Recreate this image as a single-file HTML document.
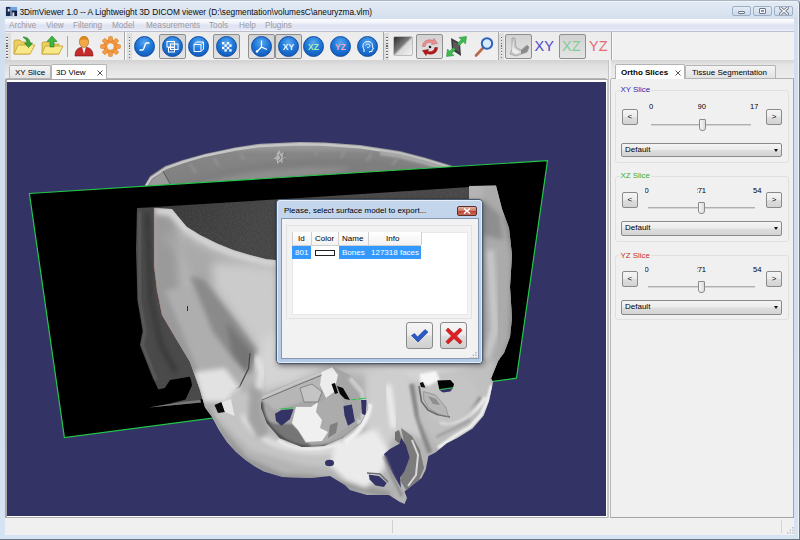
<!DOCTYPE html>
<html>
<head>
<meta charset="utf-8">
<title>3DimViewer</title>
<style>
html,body{margin:0;padding:0;}
body{width:800px;height:540px;overflow:hidden;position:relative;background:#cfdcec;font-family:"Liberation Sans",sans-serif;font-size:8px;color:#000;}
.abs,.abs-c>*{position:absolute;}
div,span{box-sizing:border-box;}
#frame{left:0;top:0;width:800px;height:540px;background:linear-gradient(#e4ebf5 0px,#d3dfee 18px,#d0deee 300px,#d6e3f2 540px);border:1px solid #6a7480;border-left:none;border-top-color:#aab6c4;border-radius:0 4px 0 0;box-shadow:inset -1px 0 0 #eef3fa,inset 0 1px 0 #eef3fa;}
#title{left:19.5px;top:6.5px;font-size:8.3px;white-space:nowrap;color:#0a0a0a;}
.wb{top:6px;height:10px;width:19px;border:1px solid #9fb0c6;border-radius:2px;background:linear-gradient(#e3ebf5,#cbd9ea);}
#menubar{left:5px;top:19px;width:789px;height:13px;background:linear-gradient(#fdfdff 0,#f0f2fa 4px,#dfe3f2 6px,#e2e6f4 10px,#f2f3f9 12px);border-bottom:1px solid #b9bfce;}
#menubar span{position:absolute;top:1.5px;font-size:8.2px;color:#9a9aa2;white-space:nowrap;}
#toolbar{left:4.5px;top:32px;width:789.5px;height:28px;background:linear-gradient(#ececec,#f0f0f0);}
#client{left:5px;top:61px;width:789px;height:474px;background:#f0f0f0;}
.grip{width:6.3px;top:1px;height:26.5px;background:#dedede;}
.grip:after{content:"";position:absolute;left:1.9px;top:3.6px;width:1.5px;height:21px;background:repeating-linear-gradient(#6a6a6a 0,#6a6a6a 1.2px,#f8f8f8 1.2px,#f8f8f8 1.9px,transparent 1.9px,transparent 2.8px);}
.tsep{width:1px;top:0;height:28px;background:#a8a8a8;border-right:1px solid #fafafa;box-sizing:content-box;}
.chk{top:2px;height:25px;border:1px solid #8f8f8f;border-radius:2px;background:linear-gradient(#d2d2d2,#e4e4e4);}
.ball{width:21px;height:21px;top:4px;border-radius:50%;background:radial-gradient(circle at 50% 30%,#5aa8f0 0,#1f78d8 45%,#0d4fb0 100%);border:1px solid #0d4aa0;}
.ball svg{position:absolute;left:0;top:0;width:19px;height:19px;}
.tab{font-size:8px;white-space:nowrap;border:1px solid #b4b4b4;border-bottom:none;border-radius:2px 2px 0 0;}
.tab.off{background:linear-gradient(#f4f4f4,#e2e2e2);}
.tab.on{background:#fff;}
#view3d{left:6.5px;top:81.5px;width:599.5px;height:434px;background:#333366;overflow:hidden;}
.gb{left:615px;width:174px;border:1px solid #e0e0e0;border-radius:3px;}
.gl{left:619.5px;font-size:7.9px;background:#f0f0f0;padding:0 1px;white-space:nowrap;}
.btn{width:15.7px;height:16.4px;border:1px solid #8a8a8a;border-radius:2px;background:linear-gradient(#f4f4f4 0,#ececec 48%,#dedede 52%,#d2d2d2);font-size:8px;text-align:center;line-height:14px;}
.num{font-size:7.6px;white-space:nowrap;overflow:hidden;}
.trk{height:2px;background:#d4d4d4;border-top:1px solid #b0b0b0;}
.hnd{width:7px;height:12px;border:1px solid #8a8a8a;border-radius:1px 1px 3px 3px;background:linear-gradient(90deg,#f6f6f6,#dcdcdc);}
.cmb{left:621px;width:161.3px;height:14.8px;border:1px solid #8a8a8a;border-radius:2px;background:linear-gradient(#f4f4f4 0,#ececec 48%,#dedede 52%,#d4d4d4);font-size:8px;line-height:12px;padding-left:3px;}
.cmb i{position:absolute;right:3px;top:5px;width:0;height:0;border-left:2.5px solid transparent;border-right:2.5px solid transparent;border-top:3px solid #111;}

</style>
</head>
<body>
<div id="frame" class="abs"></div>
<svg class="abs" style="left:4.5px;top:5.5px" width="13" height="11" viewBox="0 0 14 12" preserveAspectRatio="none"><rect x="1" y="1" width="5" height="10" fill="#1a2a55"/><rect x="6" y="1" width="7" height="5" fill="#6aa6e0"/><rect x="7" y="5" width="6" height="6" fill="#101a3a"/><rect x="3" y="3" width="2" height="3" fill="#dfe8f4"/><rect x="8" y="7" width="2" height="4" fill="#dfe8f4"/></svg>
<div id="title" class="abs">3DimViewer 1.0 -- A Lightweight 3D DICOM viewer (D:\segmentation\volumesC\aneuryzma.vlm)</div>
<div class="abs wb" style="left:732px"><div class="abs" style="left:5px;top:4px;width:7px;height:3px;border:1px solid #6c7686;background:#f4f6fa;border-radius:1px"></div></div>
<div class="abs wb" style="left:753px"><div class="abs" style="left:5px;top:1px;width:7px;height:6px;border:1px solid #6c7686;background:#f4f6fa;border-radius:1px"></div><div class="abs" style="left:7px;top:3px;width:3px;height:2px;background:#8a93a3"></div></div>
<div class="abs wb" style="left:774px"><svg class="abs" style="left:4px;top:0" width="10" height="8" viewBox="0 0 10 8"><path d="M1.5 1 L8.5 7 M8.5 1 L1.5 7" stroke="#6c7686" stroke-width="3" stroke-linecap="square"/><path d="M1.5 1 L8.5 7 M8.5 1 L1.5 7" stroke="#f6f8fb" stroke-width="1.4" stroke-linecap="square"/></svg></div>
<div id="menubar" class="abs">
<span style="left:4px">Archive</span><span style="left:41px">View</span><span style="left:68px">Filtering</span><span style="left:107px">Model</span><span style="left:141px">Measurements</span><span style="left:204px">Tools</span><span style="left:234px">Help</span><span style="left:260px">Plugins</span>
</div>
<div id="toolbar" class="abs abs-c">
<div class="grip" style="left:0px"></div>
<div class="tsep" style="left:119.9px"></div><div class="grip" style="left:122.2px;width:5.3px"></div>
<div class="tsep" style="left:378.1px"></div><div class="grip" style="left:379.7px;width:5.3px"></div>
<div class="tsep" style="left:493.1px"></div><div class="grip" style="left:494.6px;width:5px"></div>
<div class="tsep" style="left:606.5px"></div>
<div style="left:62px;top:4px;width:1px;height:21px;background:#a8a8a8"></div>
<!-- folder open -->
<svg style="left:8px;top:3px" width="23" height="22" viewBox="0 0 23 22"><path d="M1 6 L1 19 L17 19 L17 7 L9 7 L7 5 L2 5 Z" fill="#ecd060" stroke="#c0a030" stroke-width="0.8"/><path d="M1 19 L5 10 L22 10 L17 19 Z" fill="#f8e888" stroke="#c0a030" stroke-width="0.8"/><path d="M10 2 C14 2 17 4 17 8 L19.5 8 L15.5 12.5 L11.5 8 L14 8 C14 5.5 12.5 4 10 2 Z" fill="#3aa63a" stroke="#1f7a1f" stroke-width="0.6"/></svg>
<!-- folder up -->
<svg style="left:36px;top:3px" width="23" height="22" viewBox="0 0 23 22"><path d="M1 8 L1 19 L18 19 L18 9 L9 9 L7 7 L2 7 Z" fill="#ecd060" stroke="#c0a030" stroke-width="0.8"/><path d="M1 19 L4 11 L22 11 L18 19 Z" fill="#f8e888" stroke="#c0a030" stroke-width="0.8"/><path d="M11 1 L16 6.5 L13 6.5 L13 12 L9 12 L9 6.5 L6 6.5 Z" fill="#3fb83f" stroke="#1f7a1f" stroke-width="0.6"/></svg>
<!-- user -->
<svg style="left:69px;top:3px" width="20" height="22" viewBox="0 0 20 22"><path d="M1 21 C1 15 4 13 7 12.5 L13 12.5 C16 13 19 15 19 21 Z" fill="#c42a2a" stroke="#7a1010" stroke-width="0.6"/><path d="M8 12 L10 19 L12 12 Z" fill="#f0f0f0"/><ellipse cx="10" cy="7" rx="4.6" ry="5.4" fill="#f0a848" stroke="#a86818" stroke-width="0.6"/><path d="M5.4 6 C5.4 2 8 1 10 1 C12 1 14.6 2 14.6 6 C13 4 7 4 5.4 6 Z" fill="#d88820"/></svg>
<!-- gear -->
<svg style="left:95px;top:4px" width="21" height="21" viewBox="-10.5 -10.5 21 21"><g fill="#f29a44" stroke="#d87a20" stroke-width="0.5"><circle r="7"/><g id="t"><rect x="-2" y="-10" width="4" height="5" rx="1"/></g><use href="#t" transform="rotate(45)"/><use href="#t" transform="rotate(90)"/><use href="#t" transform="rotate(135)"/><use href="#t" transform="rotate(180)"/><use href="#t" transform="rotate(225)"/><use href="#t" transform="rotate(270)"/><use href="#t" transform="rotate(315)"/></g><circle r="3.6" fill="#eeeeee" stroke="#d87a20" stroke-width="0.5"/></svg>
<!-- checked frames -->
<div class="chk" style="left:154px;width:27px"></div>
<div class="chk" style="left:208px;width:27px"></div>
<div class="chk" style="left:243px;width:27px"></div>
<div class="chk" style="left:270px;width:27px"></div>
<div class="chk" style="left:411px;width:27px"></div>
<div class="chk" style="left:500px;width:27px"></div>
<div class="chk" style="left:554px;width:27px"></div>
<!-- balls -->
<div class="ball" style="left:129px"><svg viewBox="0 0 19 19"><path d="M4.5 13 L7.5 13 C9.5 13 9.5 6 11.5 6 L14.5 6" fill="none" stroke="#fff" stroke-width="1.3"/></svg></div>
<div class="ball" style="left:157px"><svg viewBox="0 0 19 19"><rect x="4" y="4.5" width="7.5" height="5.5" fill="none" stroke="#fff" stroke-width="1"/><rect x="7.5" y="7" width="7.5" height="5.5" fill="none" stroke="#fff" stroke-width="1"/><rect x="5.5" y="10.5" width="6" height="4.5" fill="none" stroke="#fff" stroke-width="1"/></svg></div>
<div class="ball" style="left:183px"><svg viewBox="0 0 19 19"><path d="M5 7.5 L12 7.5 L12 14.5 L5 14.5 Z M5 7.5 L7.5 5 L14.5 5 L14.5 12 L12 14.5 M12 7.5 L14.5 5" fill="none" stroke="#fff" stroke-width="1"/></svg></div>
<div class="ball" style="left:211px"><svg viewBox="0 0 19 19"><g fill="#fff"><rect x="5" y="5" width="2.4" height="2.4"/><rect x="9.8" y="5" width="2.4" height="2.4"/><rect x="7.4" y="7.4" width="2.4" height="2.4"/><rect x="12.2" y="7.4" width="2.4" height="2.4"/><rect x="5" y="9.8" width="2.4" height="2.4"/><rect x="9.8" y="9.8" width="2.4" height="2.4"/><rect x="7.4" y="12.2" width="2.4" height="2.4"/><rect x="12.2" y="12.2" width="2.4" height="2.4"/></g></svg></div>
<div class="ball" style="left:246px"><svg viewBox="0 0 19 19"><path d="M9.5 3.5 L9.5 10 L15 12.5 M9.5 10 L5 14.5" fill="none" stroke="#fff" stroke-width="1.2"/><circle cx="5" cy="14.5" r="1.2" fill="#fff"/></svg></div>
<div class="ball" style="left:273px"><svg viewBox="0 0 19 19"><text x="9.5" y="12.6" font-family="Liberation Sans, sans-serif" font-size="8.5" font-weight="bold" fill="#f2f6ff" text-anchor="middle">XY</text></svg></div>
<div class="ball" style="left:298px"><svg viewBox="0 0 19 19"><text x="9.5" y="12.6" font-family="Liberation Sans, sans-serif" font-size="8.5" font-weight="bold" fill="#a8f0b0" text-anchor="middle">XZ</text></svg></div>
<div class="ball" style="left:325px"><svg viewBox="0 0 19 19"><text x="9.5" y="12.6" font-family="Liberation Sans, sans-serif" font-size="8.5" font-weight="bold" fill="#f0a8c0" text-anchor="middle">YZ</text></svg></div>
<div class="ball" style="left:352px"><svg viewBox="0 0 19 19"><path d="M6 15 L6 12 C4 10 4.5 5 9.5 4.5 C14 4.5 15 8 14.5 10 L15.5 12 L14.3 12.4 L14 14.5 L11.5 14.5 L11.5 15.5" fill="none" stroke="#fff" stroke-width="1"/><path d="M7.5 8.5 C8 6.5 11.5 6.5 12 8.5 C12 10.5 9.5 11 9 10" fill="none" stroke="#fff" stroke-width="0.8"/></svg></div>
<!-- gradient square -->
<div style="left:388px;top:4px;width:20px;height:20px;border-radius:2px;border:1px solid #bdbdbd;background:linear-gradient(135deg,#2c2c2c 0,#7a7a7a 45%,#d8d8d8 55%,#f4f4f4 100%)"></div>
<!-- rotate -->
<svg style="left:414px;top:4px" width="22" height="22" viewBox="0 0 22 22"><path d="M3.5 10.5 C3.5 5 9 2.5 14 4.5 L15 2.5 L18.5 7.5 L12.5 8.5 L13.2 6.6 C10 5.6 6.5 7 6.2 10.5 Z" fill="#e89090" stroke="#c06060" stroke-width="0.5"/><path d="M18.5 11.5 C18.5 17 13 19.5 8 17.5 L7 19.5 L3.5 14.5 L9.5 13.5 L8.8 15.4 C12 16.4 15.5 15 15.8 11.5 Z" fill="#b81616" stroke="#801010" stroke-width="0.5"/><circle cx="11" cy="11" r="1.3" fill="#222"/></svg>
<!-- green arrows -->
<svg style="left:440px;top:3px" width="23" height="23" viewBox="0 0 23 23"><path d="M6 3 L15 8 L16 21 L7 15 Z" fill="#3c3c3c"/><path d="M8 6 L14 9.500 L14.500 17 L8.500 13.500 Z" fill="#5a5a5a"/><path d="M21.5 1.5 L20.5 9 L18.3 6.8 L14.5 10.5 L12.5 8.5 L16.2 4.7 L14 2.5 Z" fill="#3fb850" stroke="#1f8a30" stroke-width="0.5"/><path d="M1.5 21.5 L2.5 14 L4.7 16.2 L8.5 12.5 L10.5 14.5 L6.8 18.3 L9 20.5 Z" fill="#3fb850" stroke="#1f8a30" stroke-width="0.5"/></svg>
<!-- magnifier -->
<svg style="left:469px;top:4px" width="21" height="21" viewBox="0 0 21 21"><path d="M2 19.5 L9 12" stroke="#b86a4a" stroke-width="2.6" stroke-linecap="round"/><circle cx="13" cy="7.5" r="5.2" fill="#d6ecfa" stroke="#2f62b8" stroke-width="2"/></svg>
<!-- jaw -->
<svg style="left:503px;top:5px" width="22" height="20" viewBox="0 0 22 20"><path d="M4 1 L7 1 L8 10 L13 13 L19 8 L21 10 L19 15 L8 19 L2 17 L4 12 Z" fill="#c8c8c8" stroke="#9a9a9a" stroke-width="0.7"/><path d="M5 3 L6 11 L12 15 L18 11 L17 14 L8 17 L4 15 Z" fill="#ececec"/><path d="M13 13.500 L19 8.500 L21 10 L19 15 L13 17 Z" fill="#8a8a8a"/></svg>
<span style="left:530px;top:6.5px;font-size:14.5px;color:#4a4ac4;letter-spacing:0px;line-height:14px">XY</span>
<span style="left:557.5px;top:6.5px;font-size:14.5px;color:#84cc94;letter-spacing:0px;line-height:14px">XZ</span>
<span style="left:584.5px;top:6.5px;font-size:14.5px;color:#e66a74;letter-spacing:0px;line-height:14px">YZ</span>
</div>
<div id="client" class="abs"></div>
<!-- left tabs -->
<div class="abs" style="left:4.5px;top:60px;width:603px;height:19px;background:linear-gradient(#d2d2d2,#e0e0e0 30%,#ececec)"></div>
<div class="abs" style="left:607.5px;top:60px;width:3.5px;height:458px;background:#f2f2f2;border-left:1px solid #c4c4c4"></div>
<div class="abs" style="left:611px;top:60px;width:183px;height:19px;background:linear-gradient(#d4d4d4,#e6e6e6 25%,#ececec)"></div>
<div class="abs" style="left:6px;top:78px;width:600px;height:1px;background:#b4b4b4"></div>
<div class="abs tab off" style="left:9px;top:65px;width:42px;height:13px;padding:2px 0 0 5px">XY Slice</div>
<div class="abs tab on" style="left:51px;top:64px;width:56px;height:15px;padding:3px 0 0 4px">3D View<svg class="abs" style="left:45px;top:5px" width="6" height="6" viewBox="0 0 6 6"><path d="M0.5 0.5 L5.5 5.5 M5.5 0.5 L0.5 5.5" stroke="#444" stroke-width="0.9"/></svg></div>
<div class="abs" style="left:4.5px;top:79px;width:603px;height:439px;border:1px solid #a8a8a8;border-left-width:2px;border-bottom:1.5px solid #b0b0b0;border-right-color:#c8c8c8;background:#fff"></div>
<!-- status bar -->
<div class="abs" style="left:392px;top:520px;width:1px;height:13px;background:#d0d0d0"></div><div class="abs" style="left:781px;top:520px;width:1px;height:13px;background:#d4d4d4"></div><div class="abs" style="left:612.5px;top:32px;width:181.5px;height:28px;background:#f1f1f1"></div>
<svg class="abs" style="left:786.5px;top:527px" width="7" height="7" viewBox="0 0 8 8"><g fill="#b8b8b8"><rect x="6" y="0" width="1.5" height="1.5"/><rect x="3" y="3" width="1.5" height="1.5"/><rect x="6" y="3" width="1.5" height="1.5"/><rect x="0" y="6" width="1.5" height="1.5"/><rect x="3" y="6" width="1.5" height="1.5"/><rect x="6" y="6" width="1.5" height="1.5"/></g></svg>
<div id="view3d" class="abs">
<svg width="600" height="436" viewBox="6 81 600 436" style="position:absolute;left:-0.5px;top:-0.5px">
<defs>
<filter id="b05" x="-20%" y="-20%" width="140%" height="140%"><feGaussianBlur stdDeviation="0.6"/></filter>
<filter id="b1" x="-20%" y="-20%" width="140%" height="140%"><feGaussianBlur stdDeviation="1"/></filter>
<filter id="b2" x="-30%" y="-30%" width="160%" height="160%"><feGaussianBlur stdDeviation="2.5"/></filter>
<filter id="b4" x="-40%" y="-40%" width="180%" height="180%"><feGaussianBlur stdDeviation="5"/></filter>
<filter id="b8" x="-50%" y="-50%" width="200%" height="200%"><feGaussianBlur stdDeviation="9"/></filter>
<filter id="noise" x="0" y="0" width="100%" height="100%"><feTurbulence type="fractalNoise" baseFrequency="0.55" numOctaves="2" seed="3" result="n"/><feColorMatrix in="n" type="matrix" values="0 0 0 0 0.27  0 0 0 0 0.27  0 0 0 0 0.27  0.9 0 0 0 -0.25"/><feComposite in2="SourceGraphic" operator="in"/></filter>
<linearGradient id="rimg" x1="0" y1="0" x2="0" y2="1"><stop offset="0" stop-color="#a8a8a8"/><stop offset="0.2" stop-color="#868686"/><stop offset="1" stop-color="#7c7c7c"/></linearGradient>
<linearGradient id="braing" gradientUnits="userSpaceOnUse" x1="160" y1="205" x2="300" y2="280"><stop offset="0" stop-color="#363636"/><stop offset="0.6" stop-color="#444444"/><stop offset="1" stop-color="#464646"/></linearGradient>
<clipPath id="planeclip"><polygon points="29.4,193.5 547.5,160.6 516.5,378.2 64.4,437.5"/></clipPath>
<path id="skullp" d="M154,208 L172,209 L178.3,216.7 L186.7,226.7 L200,235 L216.7,243.3 L233.3,250 L250,255 L266.7,259.2 L276,260 L282,261 L282,300 L469,300 L469,186 L496,185.5 L502,209 L509,228 L512,255 L510,287 L512,318 L510,337 L504,353 L498.5,360 L491,378.5 L493,382 L489,401 L483.7,415.5 L472.6,428.5 L457.8,437.8 L446.7,443.3 L435.5,452.6 L428.4,456 L425.8,469.4 L421.5,478 L408.8,488 L404.5,491.5 L407,498 L404.5,504 L399.4,501.8 L389,495 L367,495 L350,490 L345,485 L330,476 L310,478 L282.6,477 L264,471.5 L255,466.5 L245.5,460 L236,452 L227,442 L219,430 L212,417 L205,407.5 L200,390 L190,362 L175,337 L162,315 L157,290 L154,265 Z"/>
<clipPath id="skullclip"><use href="#skullp"/></clipPath>
<path id="orbL" d="M261,396 L278,388 L298,380 L324,371 L333,366.5 L350,375 L363,388 L368.5,408 L361,423 L342.6,438 L324,446 L302,447 L279.6,438 L266.7,423 L261,408 Z"/>
<clipPath id="orbLclip"><use href="#orbL"/></clipPath>
</defs>
<!-- back rim above the plane -->
<path d="M140,192 L145,185 L150,176 L165,166 L182.5,160 L205,153.7 L235,147.5 L260,143.7 L300,142 L325,142.5 L360,145 L400,151 L425,157.5 L450,165 L462,170 L470,200 L140,200 Z" fill="url(#rimg)"/>
<path d="M165,192 C200,172 260,160 330,158 C380,158 420,165 445,173 L445,185 L160,196 Z" fill="#7e7e7e" filter="url(#b2)"/>
<path d="M200,185 C240,170 300,166 350,168 C340,176 260,178 215,190 Z" fill="#8e8e8e" filter="url(#b2)"/>
<path d="M146,186 L151,178 L166,168 L183,162 L205,155.7 L235,149.5 L260,146 L300,144.3 L325,144.8 L360,147.3 L400,153.3 L425,159.6 L452,167.8" fill="none" stroke="#c6c6c6" stroke-width="2.4" filter="url(#b05)"/>
<path d="M380,153 L400,156 L425,162.5 L450,170.5" fill="none" stroke="#aaaaaa" stroke-width="4" filter="url(#b1)"/>
<path d="M146,190 L152,180 L164,171 L172,186 Z" fill="#9a9a9a" filter="url(#b05)"/>
<path d="M163,171 L172,187" stroke="#5e5e5e" stroke-width="1.2" filter="url(#b05)"/>
<path d="M190,164 l6,9 M214,158 l5,8 M240,153 l4,7 M318,148 l-3,7 M345,150 l-4,8 M372,153 l-5,8 M398,158 l-6,7" stroke="#939393" stroke-width="2.2" filter="url(#b1)"/>
<path d="M277,153 l2.5,-3 l1.5,4 l3,-2 l-1,4.500 l3,1.500 l-4,1.500 l1,4 l-3,-2.500 l-2.500,3 l-1,-4.500 l-3,-1 l3,-2 Z" fill="#b4b4b4" filter="url(#b05)"/>
<path d="M279,154 l2,4 l-3,3 M285,152 l-2,5 l3,4" stroke="#6a6a6a" stroke-width="0.8" fill="none"/>
<!-- plane -->
<polygon points="29.4,193.5 547.5,160.6 516.5,378.2 64.4,437.5" fill="#000" stroke="#22c848" stroke-width="1.2"/>
<g clip-path="url(#planeclip)">
<!-- CT slice: brain -->
<path d="M154,207 L300,198 L470,187 L495,189 L500,360 L400,400 L200,399 L154,300 Z" fill="url(#braing)"/>
<path d="M154,207 L300,198 L470,187 L495,189 L500,360 L400,400 L200,399 L154,300 Z" fill="#fff" filter="url(#noise)" opacity="0.3"/>
<!-- soft tissue band -->
<path d="M137,208 L158,207 L158,300 L176,334 L189,357 L198,378 L201,402.5 L149,407.6 L170,403.4 L185.5,399.5 L192,385.6 L190.7,376.5 L170,380 L164.8,388 L158.3,389.5 L153,378 L146.7,362 L140,345 L142.8,331 L137.6,300 L136,250 Z" fill="#4a4a4a"/>
<path d="M147,212 L151,300 L161,345 L176,372" fill="none" stroke="#383838" stroke-width="5" filter="url(#b2)"/>
<path d="M139.5,212 L139.5,300 L145,331 L142.5,345 L149,362 L156,380" fill="none" stroke="#606060" stroke-width="2.2" filter="url(#b1)"/>
<path d="M149,407.6 L201,402.5 L200,400 L185,401.5 Z" fill="#787878"/>
</g>
<!-- front skull -->
<use href="#skullp" fill="#b4b4b4"/>
<g clip-path="url(#skullclip)">
<!-- left side darker -->
<path d="M150,205 L175,220 L180,300 L215,400 L195,410 L150,320 Z" fill="#9a9a9a" filter="url(#b4)"/>
<path d="M180,240 L230,265 L235,300 L200,300 Z" fill="#a8a8a8" filter="url(#b4)"/>
<!-- rim highlight -->
<path d="M156,211 L171,212 L178,220 L186.7,230 L200,238.5 L216.7,247 L233.3,253.5 L250,258.5 L266.7,262.5 L280,264" fill="none" stroke="#dadada" stroke-width="6" filter="url(#b2)"/>
<path d="M165,236 L200,262 L240,284 L280,292" fill="none" stroke="#aaaaaa" stroke-width="7" filter="url(#b4)"/>
<!-- light forehead left of dialog -->
<path d="M212,262 L282,268 L282,350 L262,352 L240,322 L214,290 Z" fill="#cbcbcb" filter="url(#b4)"/>
<!-- bright forehead / brow -->
<path d="M262,340 L280,330 L280,365 L480,365 L470,400 L400,380 L330,366 L290,385 L262,392 L254,360 Z" fill="#d4d4d4" filter="url(#b4)"/>
<!-- temporal mid grey -->
<path d="M165,290 L200,286 L247,355 L240,390 L210,400 Z" fill="#aeaeae" filter="url(#b2)"/>
<!-- shadow band -->
<path d="M190,276 L204,280 L232,316 L257,350 L251,374 L236,362 L213,332 Z" fill="#8a8a8a" filter="url(#b2)"/>
<path d="M226,322 L252,352 L247,374 L232,352 Z" fill="#747474" filter="url(#b2)"/>
<path d="M250,353 L248.5,368.5 L239.5,386.7 L222,397" fill="none" stroke="#454545" stroke-width="1.2" filter="url(#b05)"/>
<path d="M256,356 L262,372 L258,390" fill="none" stroke="#e6e6e6" stroke-width="5" filter="url(#b2)"/>
<path d="M194,372 L225,368 L240,388 L232,402 L203,402 Z" fill="#e2e2e2" filter="url(#b2)"/>
<rect x="187" y="306" width="0.8" height="5" fill="#111"/>
<!-- right side shading -->
<path d="M483,186 L500,186 L514,255 L512,340 L495,380 L483,380 Z" fill="#ababab" filter="url(#b2)"/>
<path d="M483,200 L500,215 L503,240 L483,235 Z" fill="#8e8e8e" filter="url(#b2)"/>
<path d="M506,215 L514,255 L512,340 L500,372" fill="none" stroke="#7c7c7c" stroke-width="4" filter="url(#b2)"/>
<path d="M490,250 L495,330 L485,360" fill="none" stroke="#c8c8c8" stroke-width="8" filter="url(#b2)"/>
<!-- cheek / zygomatic highlights -->
<path d="M215,415 L250,450 L300,465 L350,470 L380,455 L370,440 L330,452 L290,448 L262,425 L255,395 L235,390 Z" fill="#c4c4c4" filter="url(#b2)"/>
<path d="M243,415 C255,445 300,458 350,448" fill="none" stroke="#f0f0f0" stroke-width="3.5" filter="url(#b2)"/>
<path d="M219,430 L245,460 L282,477 L310,478 L345,485 L390,495" fill="none" stroke="#8c8c8c" stroke-width="5" filter="url(#b2)"/>
<path d="M207,408 L214,418 L232,446" fill="none" stroke="#a0a0a0" stroke-width="3" filter="url(#b1)"/>
<!-- nose bridge -->
<path d="M366,372 L405,372 L420,400 L425,440 L400,430 L385,450 L370,460 L365,420 Z" fill="#cecece" filter="url(#b2)"/>
<path d="M388,385 L394,428" fill="none" stroke="#f6f6f6" stroke-width="5" filter="url(#b2)"/>
<path d="M352,440 L380,425 L388,452 L372,475 L345,470 Z" fill="#d6d6d6" filter="url(#b2)"/>
<path d="M335,442 L375,430 L388,450 L384,470 L366,488 L345,480 L330,465 Z" fill="#ebebeb" filter="url(#b2)"/>
<!-- medial wall of right orbit -->
<path d="M411.5,384 L417,415.5 L424.4,437.8 L430,452.6" fill="none" stroke="#8a8a8a" stroke-width="5" filter="url(#b1)"/>
<!-- right cheek -->
<path d="M425,380 L495,360 L490,400 L465,425 L435,445 L420,420 Z" fill="#c0c0c0" filter="url(#b2)"/>
<path d="M492,385 L487,402 L481,415 L470,427 L455,436 L438,448" fill="none" stroke="#f4f4f4" stroke-width="3.5" filter="url(#b1)"/>
<path d="M436,412 C448,420 470,412 480,397" fill="none" stroke="#747474" stroke-width="3.5" filter="url(#b1)"/>
<path d="M440,422 C456,427 476,414 485.5,397" fill="none" stroke="#f2f2f2" stroke-width="3" filter="url(#b1)"/>
<path d="M436,437 L455,428 L470,420" fill="none" stroke="#a0a0a0" stroke-width="3" filter="url(#b1)"/>
<!-- left orbit -->
<path d="M250,385 L262,392 L262,412 L270,432 L258,440 L248,420 Z" fill="#a2a2a2" filter="url(#b2)"/>
<path d="M345,442 C360,432 368,420 370,404" fill="none" stroke="#f2f2f2" stroke-width="5" filter="url(#b1)"/>
<path d="M278,440 C290,449 315,452 340,444" fill="none" stroke="#ececec" stroke-width="4" filter="url(#b1)"/>
<use href="#orbL" fill="#a6a6a6"/>
<g clip-path="url(#orbLclip)">
<path d="M262,400 L300,383 L330,372 L318,395 L296,404 L275,410 Z" fill="#b6b6b6" filter="url(#b1)"/>
<path d="M264,420 L276,424 L292,424 L300,432 L312,448 L280,446 Z" fill="#767676" filter="url(#b1)"/>
<path d="M261,402 C262,428 285,448 312,448 C338,448 362,433 368,410" fill="none" stroke="#484848" stroke-width="4" filter="url(#b1)"/>
<path d="M262,398 L298,382 L333,368" fill="none" stroke="#d0d0d0" stroke-width="3" filter="url(#b1)"/>
<path d="M262,400 L300,384 L332,371" fill="none" stroke="#707070" stroke-width="1" filter="url(#b05)"/>
<path d="M350,378 L362,392 L366,410 L358,424" fill="none" stroke="#cccccc" stroke-width="5" filter="url(#b1)"/>
<path d="M296,406 L311,406 L324,400 L331.5,395 L339,391.5 L342.6,400 L346,408 L350,425 L337,434 L328,441.5 L305.5,443 L298,430 L291,423 Z" fill="#acacac"/>
<path d="M296,407 L311,407 L318,402 L316,412 L322,420 L320,428 L328,432 L322,441 L306,442 L298,430 L292,423 Z" fill="#f0f0f0" filter="url(#b05)"/>
<path d="M330,425 L338,422 L336,433 L328,438 Z" fill="#808080"/>
<path d="M322,371 L332,367 L338,375 L334,392 L326,398 L320,385 Z" fill="#ececec" filter="url(#b05)"/>
<path d="M300,388 L312,384 L322,392 L318,402 L304,402 Z" fill="#c4c4c4" stroke="#707070" stroke-width="0.7"/>
<path d="M275,413.7 L281.5,410 L293.5,409 L290,419 L281.5,425.7 L276,421 Z" fill="#333366"/>
<path d="M343.5,406 L352,404.5 L355.5,421 L348,425.7 L344.5,415.5 Z" fill="#333366"/>
<path d="M361,400 L366.7,400 L365.7,415.5 L362,413.7 Z" fill="#333366"/>
<path d="M331.5,384 L335,383 L338,393 L335,394 Z M337,386 L343,388 L350,400 L345,399 L340,394 Z" fill="#080808"/>
<path d="M280.5,409 L293.5,407.8 M351,400 L366.7,398" stroke="#22c848" stroke-width="1"/>
<path d="M352,400 L356,424 M357,398 L360,420" stroke="#a8a8a8" stroke-width="1.5"/>
</g>
<!-- right orbit -->
<path d="M420,385 L440,372 L470,375 L480,395 L470,415 L450,425 L432,420 Z" fill="#c4c4c4" filter="url(#b2)"/>
<path d="M420,374 L436,371 L440,380 L428,386 L420,382 Z" fill="#f6f6f6" filter="url(#b1)"/>
<path d="M437.4,380.4 L450.4,380 L454,384 L453,387.8 L439.3,389.6 Z" fill="#040404"/>
<path d="M439.3,390 L453,388 L450.4,391.5 L443,392.4 Z" fill="#333366"/>
<path d="M439.3,389.6 L453,387.6" stroke="#22c848" stroke-width="0.9"/>
<path d="M419.8,383 L423,382 L425.4,387.8 L421,387 Z" fill="#101010"/>
<path d="M419,386 L421.5,401.5 L428,410 L437,414.4 L450,417" fill="none" stroke="#6a6a6a" stroke-width="1.6" filter="url(#b05)"/>
<path d="M423.6,391.5 L435.5,395 L445.7,407 L448.4,416.4 L439.3,414.5 L428.3,408 L423.7,399 Z" fill="#b6b6b6" stroke="#808080" stroke-width="0.6" filter="url(#b05)"/>
<path d="M428,396 L436,399 L440,405 L433,404 Z" fill="#8e8e8e" filter="url(#b05)"/>
<!-- nasal aperture -->
<path d="M401,428 L412,436 L420,450 L424,468 L418,482 L406,490 L400,480 L408,460 Z" fill="#7c7c7c" filter="url(#b05)"/>
<path d="M412,440 L418,455 L416,475 L408,486" fill="none" stroke="#d8d8d8" stroke-width="2" filter="url(#b05)"/>
<path d="M390,449 L399.4,443.8 L401,437 L406,445.5 L409.6,457.5 L404.5,471 L400,478 L401,488 L394,476 L386.6,462.6 L384,454 Z" fill="#333366"/>
<path d="M368.7,474.5 L379,476 L386.6,483 L384,487 L375.5,485.6 L369.6,479.6 Z" fill="#333366"/>
<path d="M367,473 L380,474 L388,482" fill="none" stroke="#6e6e6e" stroke-width="1.5" filter="url(#b05)"/>
<path d="M384,456 L392,476 L402,496" fill="none" stroke="#909090" stroke-width="3" filter="url(#b1)"/>
<ellipse cx="329.5" cy="463" rx="4.5" ry="3.2" fill="#333366"/>
<path d="M395,432 L399,430 L401,437 L399.4,443.8 L395,440 Z" fill="#707070"/>
</g>
<!-- small dark cavity near zygomatic arch -->
<path d="M214.5,405 L221.5,402 L225,412 L218,413 Z" fill="#0c0c0c"/>
<path d="M221.5,402 L231,399 L234.5,416 L225,412 Z" fill="#e6e6e6"/>
<!-- thin slice red contour -->
<path d="M154,208 L154,265 L157,290 L162,315 L175,337" fill="none" stroke="#a86058" stroke-width="0.5" opacity="0.7"/>
</svg>
</div>
<!-- splitter -->
<div class="abs" style="left:610px;top:79px;width:184px;height:439px;border:1px solid #a4a4a4;border-top:none;border-left-color:#b8b8b8;border-bottom-width:1.5px"></div>
<div class="abs" style="left:611px;top:78px;width:183px;height:1px;background:#b4b4b4"></div>
<div class="abs tab on" style="left:615px;top:64px;width:70px;height:15px;padding:3px 0 0 5px;font-weight:bold;font-size:8px">Ortho Slices<svg class="abs" style="left:59px;top:5px" width="6" height="6" viewBox="0 0 6 6"><path d="M0.5 0.5 L5.5 5.5 M5.5 0.5 L0.5 5.5" stroke="#444" stroke-width="0.9"/></svg></div>
<div class="abs tab off" style="left:685px;top:65px;width:91px;height:13px;padding:2px 0 0 6px">Tissue Segmentation</div>
<div class="abs gb" style="top:90px;height:72.5px"></div>
<div class="abs gl" style="top:84.5px;color:#2a2ab0">XY Slice</div>
<div class="abs btn" style="left:622px;top:109px">&lt;</div>
<div class="abs btn" style="left:766.3px;top:109px">&gt;</div>
<div class="abs num" style="left:649px;top:102px;width:20px">0</div>
<div class="abs num" style="left:697.5px;top:102px;width:20px">90</div>
<div class="abs num" style="left:750px;top:102px;width:8px">177</div>
<div class="abs trk" style="left:651px;top:124px;width:100px"></div>
<div class="abs hnd" style="left:698.5px;top:118.5px"></div>
<div class="abs cmb" style="top:142.5px">Default<i></i></div>
<div class="abs gb" style="top:175.7px;height:66.10000000000002px"></div>
<div class="abs gl" style="top:171px;color:#30b040">XZ Slice</div>
<div class="abs btn" style="left:622px;top:191.6px">&lt;</div>
<div class="abs btn" style="left:766.3px;top:191.6px">&gt;</div>
<div class="abs num" style="left:644.6px;top:185.5px;width:20px">0</div>
<div class="abs num" style="left:696.5px;top:185.5px;width:9.6px;text-indent:-3.1px">271</div>
<div class="abs num" style="left:753px;top:185.5px;width:8.5px">542</div>
<div class="abs trk" style="left:647.7px;top:207px;width:107.59999999999991px"></div>
<div class="abs hnd" style="left:698px;top:202px"></div>
<div class="abs cmb" style="top:220.8px">Default<i></i></div>
<div class="abs gb" style="top:254.8px;height:65.59999999999997px"></div>
<div class="abs gl" style="top:250.5px;color:#c03030">YZ Slice</div>
<div class="abs btn" style="left:622px;top:271px">&lt;</div>
<div class="abs btn" style="left:766.3px;top:271px">&gt;</div>
<div class="abs num" style="left:644.6px;top:265px;width:20px">0</div>
<div class="abs num" style="left:696.5px;top:265px;width:9.6px;text-indent:-3.1px">271</div>
<div class="abs num" style="left:753px;top:265px;width:8.5px">542</div>
<div class="abs trk" style="left:647.7px;top:286.4px;width:107.59999999999991px"></div>
<div class="abs hnd" style="left:698px;top:281.3px"></div>
<div class="abs cmb" style="top:300px">Default<i></i></div>
<div class="abs" style="left:275.5px;top:199px;width:207.5px;height:165px;border:1px solid #4a5a70;border-radius:4px;background:linear-gradient(#c4d6ec,#b4cae6);box-shadow:0 0 0 0.5px rgba(0,0,0,.2), 1px 2px 5px rgba(0,0,0,.35)"></div>
<div class="abs" style="left:276.5px;top:200px;width:205.5px;height:163px;border:1px solid #e4eefa;border-radius:3px;"></div>
<div class="abs" style="left:284px;top:206px;font-size:8px;white-space:nowrap">Please, select surface model to export...</div>
<div class="abs" style="left:457px;top:206px;width:20px;height:10px;border:1px solid #5a3030;border-radius:2px;background:linear-gradient(#e4b0a0 0,#d07a68 45%,#bc4434 55%,#cf6a54)"><svg class="abs" style="left:5px;top:1px" width="8" height="6" viewBox="0 0 8 6"><path d="M1 0.5 L7 5.5 M7 0.5 L1 5.5" stroke="#fff" stroke-width="1.5"/></svg></div>
<div class="abs" style="left:280.5px;top:218px;width:198px;height:141px;background:#f2f2f2;border:1px solid #8898b0"></div>
<div class="abs" style="left:286px;top:225px;width:186px;height:94px;border:1px solid #e2e2e2"></div>
<div class="abs" style="left:291.5px;top:231.5px;width:176px;height:83px;background:#fff;border:1px solid #e8e8e8"></div>
<div class="abs" style="left:292px;top:232px;width:129px;height:13.5px;background:linear-gradient(#fff,#f2f2f2);border-bottom:1px solid #d0d0d0"></div>
<div class="abs abs-c" style="left:292px;top:232px;width:130px;height:28px;font-size:8px;white-space:nowrap">
<span style="left:6px;top:2px">Id</span><span style="left:23px;top:2px">Color</span><span style="left:50px;top:2px">Name</span><span style="left:94px;top:2px">Info</span>
<div style="left:18.5px;top:0;width:1px;height:13px;background:#d0d0d0"></div><div style="left:46px;top:0;width:1px;height:13px;background:#d0d0d0"></div><div style="left:75.5px;top:0;width:1px;height:13px;background:#d0d0d0"></div><div style="left:128.5px;top:0;width:1px;height:13px;background:#d0d0d0"></div><div style="left:0;top:0;width:1px;height:13px;background:#d0d0d0"></div>
<div style="left:0;top:14px;width:18.5px;height:13px;background:#3399ff"></div>
<div style="left:46.5px;top:14px;width:82.5px;height:13px;background:#3399ff"></div>
<span style="left:3px;top:16px;color:#fff">801</span><span style="left:50px;top:16px;color:#fff">Bones</span><span style="left:79px;top:16px;color:#fff">127318 faces</span>
<div style="left:23px;top:17.5px;width:19.5px;height:6.5px;border:1px solid #222;background:#fff"></div>
</div>
<div class="abs" style="left:406px;top:322px;width:26.5px;height:26.5px;border:1px solid #8a8a8a;border-radius:3px;background:linear-gradient(#f6f6f6 0,#ececec 48%,#dedede 52%,#d0d0d0)"><svg class="abs" style="left:3px;top:5px" width="19" height="15" viewBox="0 0 19 15"><path d="M1.5 7.5 L4.5 5.5 L7.5 9 L15 1.5 L18 4 L8 14 Z" fill="#2a5ac8" stroke="#183a90" stroke-width="0.6"/></svg></div>
<div class="abs" style="left:440px;top:322px;width:26.5px;height:26.5px;border:1px solid #8a8a8a;border-radius:3px;background:linear-gradient(#f6f6f6 0,#ececec 48%,#dedede 52%,#d0d0d0)"><svg class="abs" style="left:3.5px;top:3.5px" width="18" height="18" viewBox="0 0 18 18"><path d="M3 1 L9 6.5 L15 1 L17 3.5 L11.5 9 L17 14.5 L15 17 L9 11.5 L3 17 L1 14.5 L6.5 9 L1 3.5 Z" fill="#e02020" stroke="#a01010" stroke-width="0.6"/></svg></div>
<svg class="abs" style="left:470px;top:352px" width="7" height="7" viewBox="0 0 8 8"><g fill="#b0b0b0"><rect x="6" y="0" width="1.5" height="1.5"/><rect x="3" y="3" width="1.5" height="1.5"/><rect x="6" y="3" width="1.5" height="1.5"/><rect x="0" y="6" width="1.5" height="1.5"/><rect x="3" y="6" width="1.5" height="1.5"/><rect x="6" y="6" width="1.5" height="1.5"/></g></svg>

</body>
</html>
